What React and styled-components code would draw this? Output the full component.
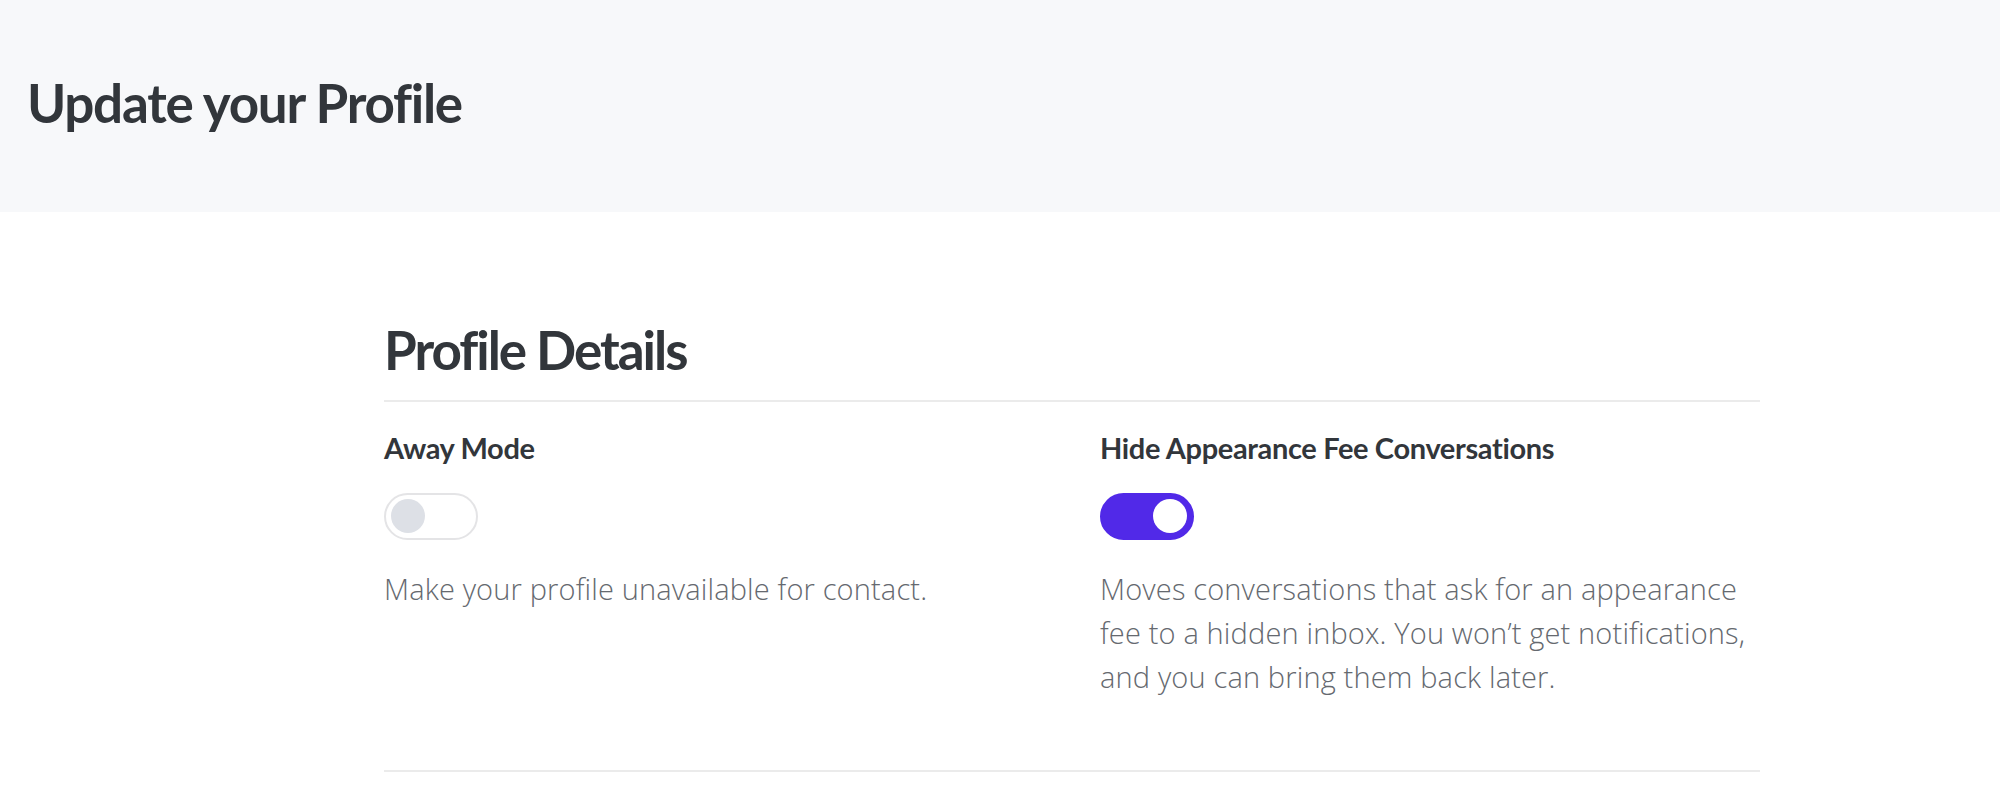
import React, { useState } from "react";
import styled, { createGlobalStyle } from "styled-components";

const GlobalStyle = createGlobalStyle`
  html, body {
    margin: 0;
    padding: 0;
    background: #ffffff;
    font-family: "Lato", "Open Sans", sans-serif;
    -webkit-font-smoothing: antialiased;
  }
  * { box-sizing: border-box; }
`;

const Page = styled.div`
  display: flex;
  flex-direction: column;
  min-height: 805px;
`;

const Header = styled.header`
  height: 212px;
  background: #f7f8fa;
  display: flex;
  align-items: center;
  padding: 0 0 8px 27px;
`;

const PageTitle = styled.h1`
  margin: 0;
  font-size: 53px;
  font-weight: 700;
  letter-spacing: -1.25px;
  color: #32363b;
`;

const Main = styled.main`
  padding: 0 0 0 384px;
`;

const Section = styled.section`
  width: 1376px;
`;

const SectionHeading = styled.h2`
  margin: 0;
  padding: 106px 0 18px;
  font-size: 53px;
  font-weight: 700;
  letter-spacing: -2px;
  line-height: 1.2;
  color: #32363b;
  border-bottom: 2px solid #ebebeb;
`;

const SettingsGrid = styled.div`
  display: grid;
  grid-template-columns: 660px 660px;
  column-gap: 56px;
  padding: 26px 0 71px;
  border-bottom: 2px solid #ebebeb;
`;

const Setting = styled.div`
  display: flex;
  flex-direction: column;
  align-items: flex-start;
`;

const SettingLabel = styled.div`
  font-size: 29px;
  font-weight: 700;
  letter-spacing: -0.35px;
  line-height: 40px;
  color: #32363b;
`;

const ToggleTrack = styled.button`
  margin-top: 25px;
  width: 94px;
  height: 47px;
  padding: 0 5px;
  border-radius: 24px;
  border: 2px solid ${(p) => (p.$on ? "#5129e8" : "#e4e4e6")};
  background: ${(p) => (p.$on ? "#5129e8" : "#ffffff")};
  display: flex;
  align-items: center;
  justify-content: ${(p) => (p.$on ? "flex-end" : "flex-start")};
  cursor: pointer;
`;

const ToggleKnob = styled.span`
  width: 34px;
  height: 34px;
  border-radius: 50%;
  background: ${(p) => (p.$on ? "#ffffff" : "#dde0e6")};
`;

const Description = styled.p`
  margin: 27px 0 0;
  font-family: "Open Sans", "Lato", sans-serif;
  font-size: 29px;
  font-weight: 300;
  letter-spacing: 0.15px;
  line-height: 44px;
  color: #65696f;
`;

function Toggle({ on, onChange }) {
  return (
    <ToggleTrack $on={on} onClick={() => onChange(!on)} aria-pressed={on}>
      <ToggleKnob $on={on} />
    </ToggleTrack>
  );
}

export default function App() {
  const [away, setAway] = useState(false);
  const [hideFee, setHideFee] = useState(true);
  return (
    <Page>
      <GlobalStyle />
      <Header>
        <PageTitle>Update your Profile</PageTitle>
      </Header>
      <Main>
        <Section>
          <SectionHeading>Profile Details</SectionHeading>
          <SettingsGrid>
            <Setting>
              <SettingLabel>Away Mode</SettingLabel>
              <Toggle on={away} onChange={setAway} />
              <Description>Make your profile unavailable for contact.</Description>
            </Setting>
            <Setting>
              <SettingLabel>Hide Appearance Fee Conversations</SettingLabel>
              <Toggle on={hideFee} onChange={setHideFee} />
              <Description>
                Moves conversations that ask for an appearance fee to a hidden inbox. You won’t get notifications, and you can bring them back later.
              </Description>
            </Setting>
          </SettingsGrid>
        </Section>
      </Main>
    </Page>
  );
}
